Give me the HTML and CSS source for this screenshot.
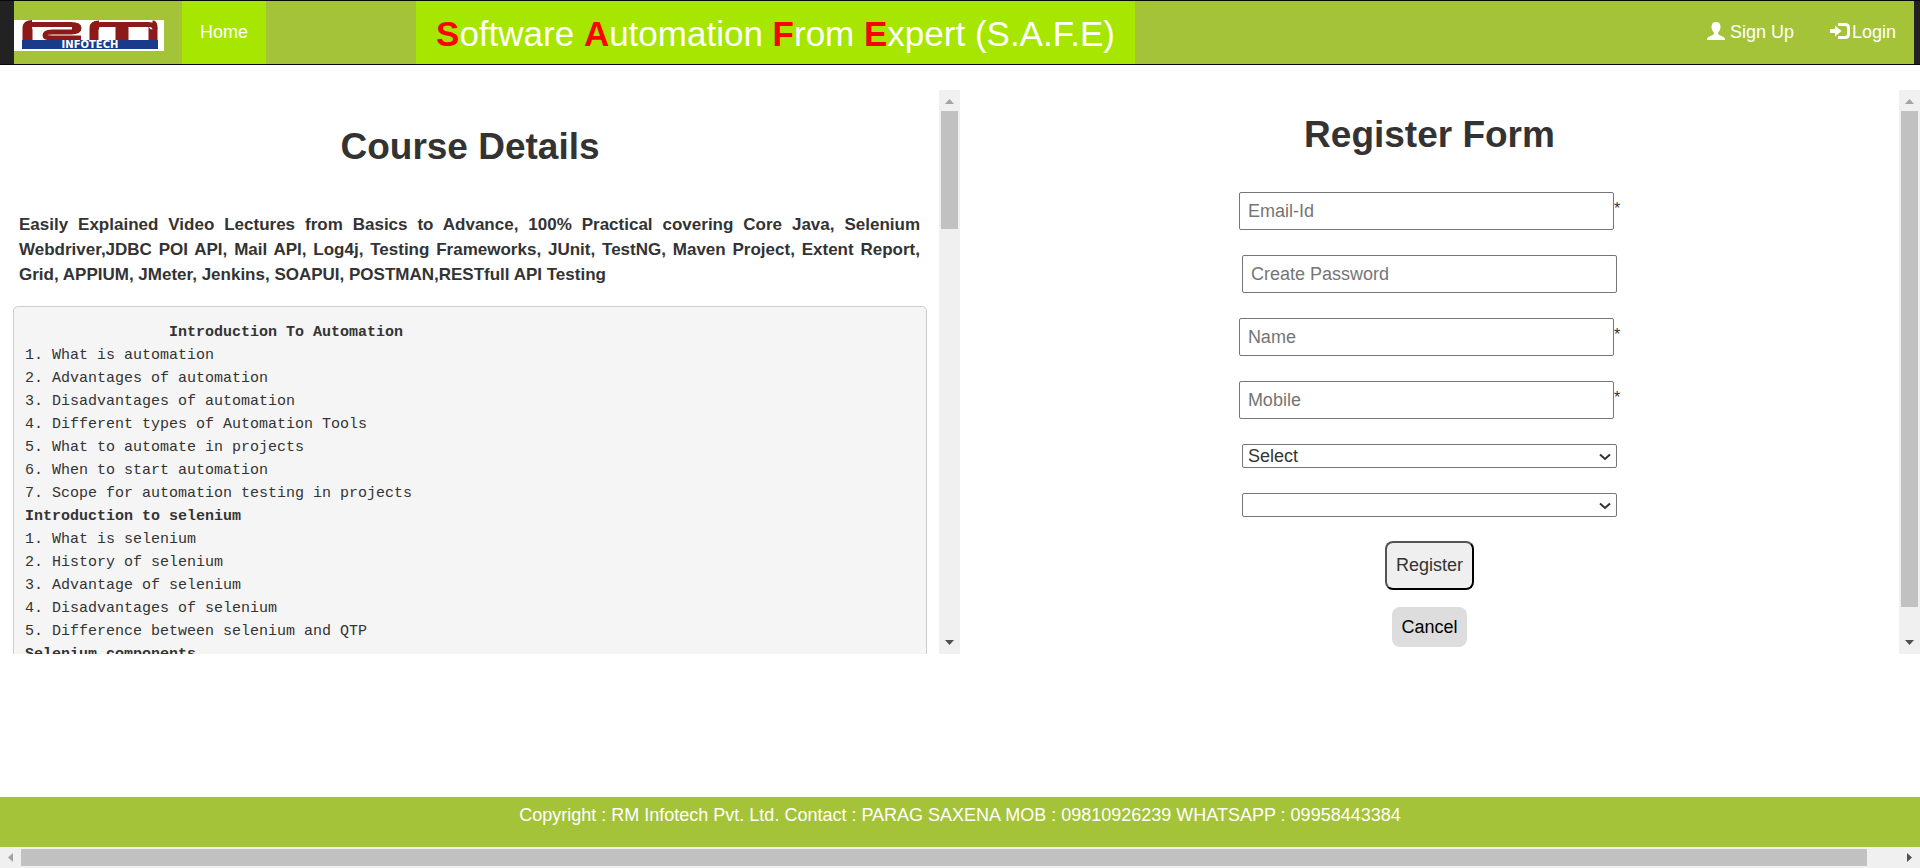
FILE: index.html
```html
<!DOCTYPE html>
<html lang="en">
<head>
<meta charset="utf-8">
<title>Software Automation From Expert</title>
<link rel="stylesheet" href="styles.css">
</head>
<body>
<header class="navbar">
  <nav class="nav-inner">
    <a class="brand" href="#" aria-label="RM Infotech">
      <svg class="logo" viewBox="0 0 150 31" role="img" aria-hidden="true">
        <rect width="150" height="31" fill="#fff"/>
        <g fill="none" stroke="#8c1a18" stroke-linejoin="round">
          <path stroke-width="10" d="M13.500 20V8Q13.500 5 18 5"/>
          <path stroke-width="5" d="M15 4.500H57Q65 4.500 65 8Q65 12 57 12H38Q31 12 31 15.500Q31 18 38 18H67"/>
          <path stroke-width="9" d="M62.500 6V11M80 20V8Q80 5 85 5M138.500 5Q139 5 139 9V20"/>
          <path stroke-width="5" d="M80 9Q80 4.500 87 4.500H134Q141 4.500 141 9"/>
          <path stroke-width="13" d="M108 5V20"/>
        </g>
        <rect x="8" y="20" width="136" height="9" fill="#1a3a8a"/>
        <text class="logo-text" x="76" y="28" text-anchor="middle">INFOTECH</text>
      </svg>
    </a>
    <a class="nav-link nav-active" href="#">Home</a>
    <a class="nav-title" href="#"><b>S</b>oftware <b>A</b>utomation <b>F</b>rom <b>E</b>xpert (S.A.F.E)</a>
    <div class="nav-right">
      <a class="nav-link" href="#"><svg class="icon" viewBox="0 0 18 18" aria-hidden="true"><path fill="#fff" d="M9 0C6 0 4.500 2 4.500 4.700C4.500 7 5.400 9 6.800 10.200V12.200C5.500 13.500 0 14.500 0 17V18H18V17C18 14.500 12.500 13.500 11.200 12.200V10.200C12.600 9 13.500 7 13.500 4.700C13.500 2 12 0 9 0Z"/></svg> Sign Up</a>
      <a class="nav-link" href="#"><svg class="icon icon-wide" viewBox="0 0 20 18" aria-hidden="true"><path fill="#fff" d="M0 7H5V3.500L11.500 9L5 14.500V11H0Z"/><path fill="none" stroke="#fff" stroke-width="3" d="M8 2.500H15Q18.500 2.500 18.500 6V12Q18.500 15.500 15 15.500H8"/></svg>Login</a>
    </div>
  </nav>
</header>

<main class="columns">
  <section class="pane">
    <div class="pane-body course">
      <h1>Course Details</h1>
      <p class="lead">Easily Explained Video Lectures from Basics to Advance, 100% Practical covering Core Java, Selenium Webdriver,JDBC POI API, Mail API, Log4j, Testing Frameworks, JUnit, TestNG, Maven Project, Extent Report, Grid, APPIUM, JMeter, Jenkins, SOAPUI, POSTMAN,RESTfull API Testing</p>
<pre class="syllabus"><b>                Introduction To Automation</b>
1. What is automation
2. Advantages of automation
3. Disadvantages of automation
4. Different types of Automation Tools
5. What to automate in projects
6. When to start automation
7. Scope for automation testing in projects
<b>Introduction to selenium</b>
1. What is selenium
2. History of selenium
3. Advantage of selenium
4. Disadvantages of selenium
5. Difference between selenium and QTP
<b>Selenium components</b>
</pre>
    </div>
    <div class="vbar" aria-hidden="true">
      <svg class="arrow" viewBox="0 0 21 21"><path fill="#a3a3a3" d="M6 14L10.500 9L15 14Z"/></svg>
      <div class="track"><div class="thumb thumb-short"></div></div>
      <svg class="arrow" viewBox="0 0 21 21"><path fill="#505050" d="M6 7H15L10.500 12Z"/></svg>
    </div>
  </section>

  <section class="pane">
    <form class="pane-body register">
      <h1>Register Form</h1>
      <div class="field"><input type="email" placeholder="Email-Id" aria-label="Email-Id"><span class="required">*</span></div>
      <div class="field"><input type="password" placeholder="Create Password" aria-label="Create Password"></div>
      <div class="field"><input type="text" placeholder="Name" aria-label="Name"><span class="required">*</span></div>
      <div class="field"><input type="tel" placeholder="Mobile" aria-label="Mobile"><span class="required">*</span></div>
      <div class="field"><select aria-label="Country"><option>Select</option></select><svg class="chevron" viewBox="0 0 12 8" aria-hidden="true"><path d="M1 1.500L6 6L11 1.500"/></svg></div>
      <div class="field"><select aria-label="State"><option></option></select><svg class="chevron" viewBox="0 0 12 8" aria-hidden="true"><path d="M1 1.500L6 6L11 1.500"/></svg></div>
      <button class="submit" type="submit">Register</button>
      <a class="cancel" href="#">Cancel</a>
    </form>
    <div class="vbar" aria-hidden="true">
      <svg class="arrow" viewBox="0 0 21 21"><path fill="#a3a3a3" d="M6 14L10.500 9L15 14Z"/></svg>
      <div class="track"><div class="thumb thumb-long"></div></div>
      <svg class="arrow" viewBox="0 0 21 21"><path fill="#505050" d="M6 7H15L10.500 12Z"/></svg>
    </div>
  </section>
</main>

<footer class="footer">Copyright : RM Infotech Pvt. Ltd. Contact : PARAG SAXENA MOB : 09810926239 WHATSAPP : 09958443384</footer>
<div class="hbar" aria-hidden="true">
  <svg class="arrow" viewBox="0 0 21 21"><path fill="#a3a3a3" d="M13 6V15L8 10.500Z"/></svg>
  <div class="htrack"><div class="hthumb"></div></div>
  <svg class="arrow" viewBox="0 0 21 21"><path fill="#505050" d="M8 6V15L13 10.500Z"/></svg>
</div>
</body>
</html>
```
FILE: styles.css
```css
* { box-sizing: border-box; }

body {
  margin: 0;
  min-height: 100vh;
  display: flex;
  flex-direction: column;
  background: #fff;
  color: #333;
  font: 18px/25px "Liberation Sans", Arial, sans-serif;
}

a { color: inherit; text-decoration: none; }

/* Navigation */
.navbar {
  background: #222;
  border: solid #080808;
  border-width: 1px 0;
  padding: 0 6px 0 14px;
}
.nav-inner {
  display: flex;
  height: 63px;
  background: #a4c339;
  color: #fff;
}
.brand { margin-right: 18px; padding-top: 19px; }
.logo { display: block; width: 150px; height: 31px; }
.logo-text { font: bold 10px "DejaVu Sans", sans-serif; fill: #fff; }
.nav-link { display: block; padding: 19px 18px; white-space: pre; }
.nav-active, .nav-title { background: #a6e600; }
.nav-title {
  margin-left: 150px;
  padding: 0 20px;
  font-size: 35px;
  line-height: 65px;
  white-space: nowrap;
}
.nav-title b { color: #f00; }
.nav-right { display: flex; margin-left: auto; }
.icon { width: 18px; height: 18px; vertical-align: -2px; }
.icon-wide { width: 20px; margin-right: 2px; }

/* Scrolling panes */
.columns {
  display: grid;
  grid-template-columns: 1fr 1fr;
  height: 65vh;
  margin-top: 25px;
}
.pane { display: flex; min-height: 0; }
.pane-body { flex: 1; min-width: 0; overflow: hidden; }
h1 { margin: 0; font-size: 37px; line-height: 42px; text-align: center; }

.course { padding: 36px 12px 0 13px; }
.lead {
  margin: 44px 7px 19px 6px;
  font-size: 17px;
  font-weight: bold;
  text-align: justify;
}
.syllabus {
  margin: 0;
  padding: 14px 11px;
  border: 1px solid #ccc;
  border-radius: 5px;
  background: #f5f5f5;
  font: 15px/23px Consolas, "Liberation Mono", monospace;
}

/* Registration form */
.register {
  display: flex;
  flex-direction: column;
  align-items: center;
  gap: 25px;
  padding-top: 24px;
}
.register h1 { margin-bottom: 11px; }
.field { position: relative; display: flex; align-items: flex-start; }
.required { font-size: 16px; line-height: 34px; }
.field input, .field select {
  width: 375px;
  border: 1px solid #767676;
  border-radius: 2px;
  background: #fff;
  color: #333;
  font: inherit;
}
.field input { height: 38px; padding: 0 8px; }
.field input::placeholder { color: #757575; }
.field select { height: 24px; padding: 0 5px; line-height: 22px; appearance: none; }
.chevron {
  position: absolute;
  top: 9px;
  right: 6px;
  width: 12px;
  height: 8px;
  fill: none;
  stroke: #333;
  stroke-width: 2;
  pointer-events: none;
}
.submit {
  margin-top: -1px;
  padding: 10px 9px;
  border: 2px outset #000;
  border-radius: 8px;
  background: #efefef;
  color: #333;
  font: inherit;
}
.cancel {
  margin-top: -8px;
  padding: 8px 9px;
  border-radius: 8px;
  background: #ddd;
  color: #000;
  line-height: 24px;
}

/* Footer */
.footer {
  min-height: 50px;
  margin-top: auto;
  padding-top: 6px;
  background: #a4c339;
  color: #fff;
  text-align: center;
}

/* Scroll bars */
.vbar { display: flex; flex-direction: column; width: 21px; background: #f0f0f0; }
.arrow { display: block; width: 21px; height: 21px; flex: none; }
.track { flex: 1; padding: 0 2px; }
.thumb, .hthumb { background: #c1c1c1; }
.thumb-short { height: 118px; }
.thumb-long { height: 95%; }
.hbar { display: flex; background: #f0f0f0; }
.htrack { flex: 1; padding: 2px 0; }
.hthumb { width: 98.3%; height: 17px; }
```
